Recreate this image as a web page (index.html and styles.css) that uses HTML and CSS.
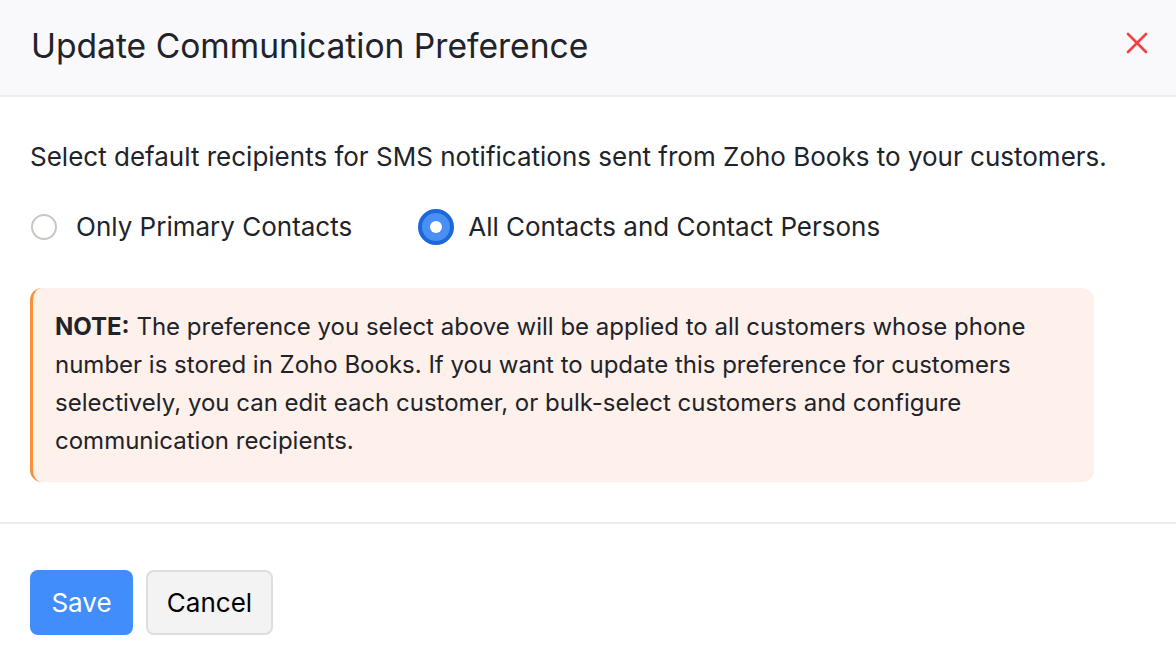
FILE: index.html
```html
<!DOCTYPE html>
<html>
<head>
<meta charset="utf-8">
<link rel="stylesheet" href="styles.css">
</head>
<body>
<div class="modal">
  <div class="header">
    <h1 class="title">Update Communication Preference</h1>
    <button class="close" aria-label="Close">
      <svg width="22" height="22" viewBox="0 0 22 22"><path d="M2 2 L20 20 M20 2 L2 20" stroke="#f5413f" stroke-width="2.6" stroke-linecap="round"/></svg>
    </button>
  </div>
  <div class="body">
    <p class="intro">Select default recipients for SMS notifications sent from Zoho Books to your customers.</p>
    <div class="radios">
      <label class="radio"><span class="dot"></span>Only Primary Contacts</label>
      <label class="radio checked"><span class="dot"></span>All Contacts and Contact Persons</label>
    </div>
    <div class="note"><b>NOTE:</b> The preference you select above will be applied to all customers whose phone number is stored in Zoho Books. If you want to update this preference for customers selectively, you can edit each customer, or bulk-select customers and configure communication recipients.</div>
  </div>
  <div class="footer">
    <button class="btn primary">Save</button>
    <button class="btn secondary">Cancel</button>
  </div>
</div>
</body>
</html>
```
FILE: styles.css
```css
* { box-sizing: border-box; }
html, body { margin: 0; padding: 0; background: #fff; }
body { font-family: Inter, "Noto Sans", sans-serif; color: #21232a; font-optical-sizing: none; }
.modal { width: 1176px; }
.header {
  height: 97px;
  background: #f9f9fb;
  border-bottom: 2px solid #ececef;
  display: flex;
  align-items: center;
  justify-content: space-between;
  padding: 0 28px 4px 31px;
}
.title { margin: 0; font-size: 33.6px; font-weight: 400; color: #21232a; font-optical-sizing: none; }
.close { background: none; border: 0; padding: 0; display: flex; margin-top: -6px; }
.body { padding: 44px 30px 40px 30px; border-bottom: 2px solid #ececef; }
.intro { margin: 0; font-size: 26px; line-height: 32px; }
.radios { display: flex; margin-top: 36px; gap: 66px; }
.radio { display: flex; align-items: center; font-size: 26px; line-height: 32px; }
.dot {
  width: 26px; height: 26px; border-radius: 50%;
  border: 2px solid #c9c6c3; margin-right: 19px; margin-left: 1px;
  position: relative;
}
.checked .dot {
  width: 36px; height: 36px; margin-left: 0; margin-right: 14px;
  border: 4px solid #1a68d9; background: #4a8ff4;
}
.checked .dot::after {
  content: ""; position: absolute; left: 50%; top: 50%;
  width: 12px; height: 12px; margin: -6px 0 0 -6px;
  border-radius: 50%; background: #fff;
}
.note {
  margin-top: 43px; width: 1064px;
  background: #fef1eb; border-left: 3px solid #f7913a;
  border-radius: 12px;
  padding: 20px 24px 22px 22px;
  font-size: 24px; line-height: 38px;
}
.note b { font-weight: 700; }
.footer { padding: 46px 30px; display: flex; gap: 13px; }
.btn {
  height: 65px; border-radius: 8px; font-family: Inter, sans-serif;
  font-size: 26px; padding: 0; font-optical-sizing: none;
}
.primary { background: #408dfb; color: #fff; border: 0; width: 103px; }
.secondary { background: #f3f3f3; color: #000; border: 2px solid #dedede; width: 127px; }
```
